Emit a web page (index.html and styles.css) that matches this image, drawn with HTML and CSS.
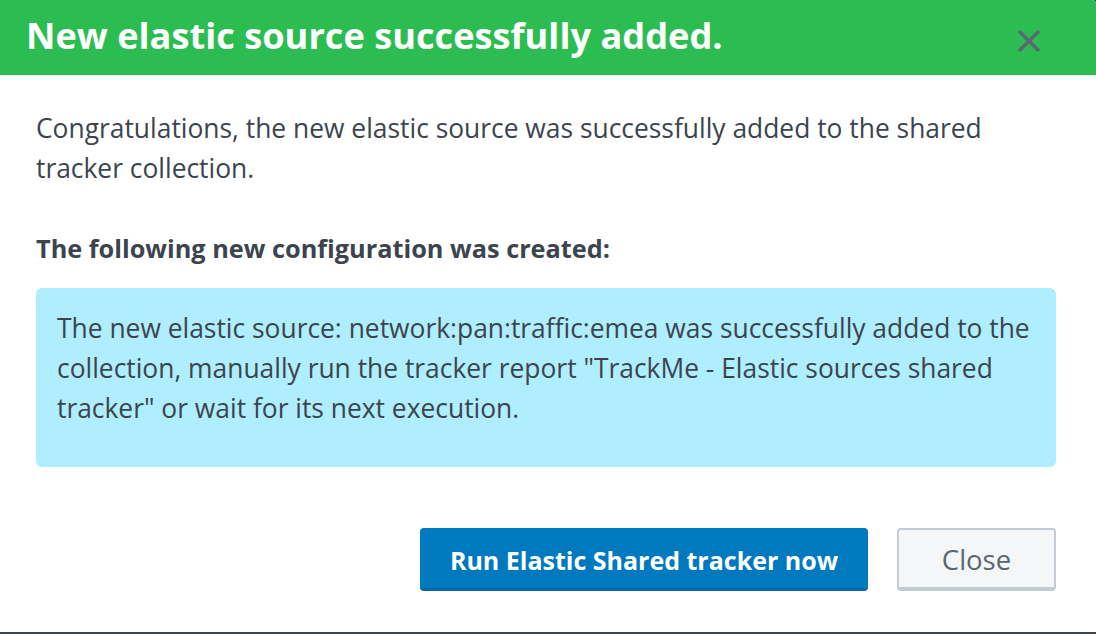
FILE: index.html
```html
<!DOCTYPE html>
<html>
<head>
<meta charset="utf-8">
<link rel="stylesheet" href="styles.css">
</head>
<body>
<div class="modal">
  <div class="modal-header">
    <h1 class="modal-title">New elastic source successfully added.</h1>
    <button class="close-x" aria-label="Close">
      <svg width="22" height="22" viewBox="0 0 22 22"><path d="M1 1 L21 21 M21 1 L1 21" stroke="#5c6773" stroke-width="3.4" stroke-linecap="butt" fill="none"/></svg>
    </button>
  </div>
  <div class="modal-body">
    <p class="intro">Congratulations, the new elastic source was successfully added to the shared tracker collection.</p>
    <p class="subhead">The following new configuration was created:</p>
    <div class="info">
      <p>The new elastic source: network:pan:traffic:emea was successfully added to the collection, manually run the tracker report "TrackMe - Elastic sources shared tracker" or wait for its next execution.</p>
    </div>
  </div>
  <div class="modal-footer">
    <button class="btn btn-primary">Run Elastic Shared tracker now</button>
    <button class="btn btn-default">Close</button>
  </div>
</div>
</body>
</html>
```
FILE: styles.css
```css
html, body {
  margin: 0;
  padding: 0;
  height: 100%;
  background: #3c444d;
}
body {
  font-family: "Open Sans", Lato, sans-serif;
  color: #3c444d;
}
.modal {
  background: #ffffff;
  height: 632px;
  display: flex;
  flex-direction: column;
  border-radius: 0 4px 0 0;
  overflow: hidden;
}
.modal-header {
  height: 75px;
  background: #2cbd52;
  border-bottom: 1px solid #e1e6eb;
  display: flex;
  align-items: center;
  justify-content: space-between;
  padding: 0 56px 0 26px;
  box-sizing: content-box;
}
.modal-title {
  margin: 0;
  font-size: 36.2px;
  font-weight: 700;
  color: #ffffff;
  line-height: 1;
  letter-spacing: 0;
  padding-bottom: 4px;
}
.close-x {
  background: none;
  border: 0;
  padding: 0;
  margin-top: 6px;
  width: 22px;
  height: 22px;
  display: flex;
  cursor: pointer;
}
.modal-body {
  padding: 32px 40px 0 36px;
  font-size: 26.4px;
  line-height: 40px;
}
.modal-body p {
  margin: 0;
}
.intro {
  margin-bottom: 40px !important;
}
.subhead {
  font-size: 25.3px;
  font-weight: 700;
  margin-bottom: 20px !important;
}
.info {
  background: #aeeefe;
  border-radius: 6px;
  padding: 20px 8px 39px 21px;
}
.modal-footer {
  display: flex;
  justify-content: flex-end;
  gap: 29px;
  padding: 61px 40px 0 0;
}
.btn {
  height: 63px;
  border-radius: 4px;
  font-family: inherit;
  cursor: pointer;
  box-sizing: border-box;
}
.btn-primary {
  background: #0079bf;
  color: #ffffff;
  font-size: 25px;
  font-weight: 700;
  border: 0;
  border-bottom: 3px solid #0069a6;
  padding: 3px 20px 0;
  width: 448px;
}
.btn-default {
  background: #f4f6f8;
  color: #5c6773;
  font-size: 27.5px;
  font-weight: 400;
  border: 2px solid #c3cbd4;
  border-bottom-width: 4px;
  width: 159px;
  padding: 2px 0 0;
}
```
